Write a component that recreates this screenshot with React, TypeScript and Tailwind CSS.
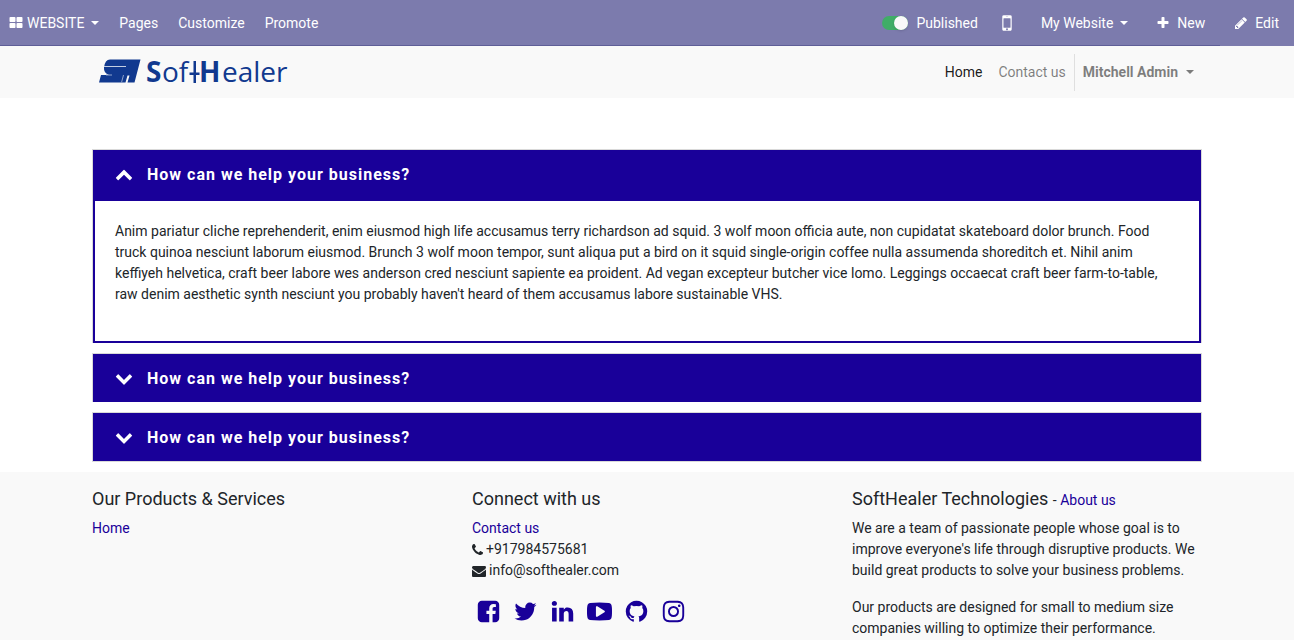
import React, { useState } from 'react';

const icons = {
  thLarge:
    'M832 1024v384q0 52-38 90t-90 38h-512q-52 0-90-38t-38-90v-384q0-52 38-90t90-38h512q52 0 90 38t38 90zm0-768v384q0 52-38 90t-90 38h-512q-52 0-90-38t-38-90v-384q0-52 38-90t90-38h512q52 0 90 38t38 90zm896 768v384q0 52-38 90t-90 38h-512q-52 0-90-38t-38-90v-384q0-52 38-90t90-38h512q52 0 90 38t38 90zm0-768v384q0 52-38 90t-90 38h-512q-52 0-90-38t-38-90v-384q0-52 38-90t90-38h512q52 0 90 38t38 90z',
  mobile:
    'M976 1408q0-33-23.5-56.5t-56.5-23.5-56.5 23.5-23.5 56.5 23.5 56.5 56.5 23.5 56.5-23.5 23.5-56.5zm208-160v-704q0-13-9.5-22.5t-22.5-9.5h-512q-13 0-22.5 9.5t-9.5 22.5v704q0 13 9.5 22.5t22.5 9.5h512q13 0 22.5-9.5t9.5-22.5zm-192-848q0-16-16-16h-160q-16 0-16 16t16 16h160q16 0 16-16zm288-16v1024q0 52-38 90t-90 38h-512q-52 0-90-38t-38-90v-1024q0-52 38-90t90-38h512q52 0 90 38t38 90z',
  plus:
    'M1600 736v192q0 40-28 68t-68 28h-416v416q0 40-28 68t-68 28h-192q-40 0-68-28t-28-68v-416h-416q-40 0-68-28t-28-68v-192q0-40 28-68t68-28h416v-416q0-40 28-68t68-28h192q40 0 68 28t28 68v416h416q40 0 68 28t28 68z',
  pencil:
    'M491 1536l91-91-235-235-91 91v107h128v128h107zm523-928q0-22-22-22-10 0-17 7l-542 542q-7 7-7 17 0 22 22 22 10 0 17-7l542-542q7-7 7-17zm-54-192l416 416-832 832h-416v-416zm683 96q0 53-37 90l-166 166-416-416 166-165q36-38 90-38 53 0 91 38l235 234q37 39 37 91z',
  chevronDown:
    'M1683 808l-742 741q-19 19-45 19t-45-19l-742-741q-19-19-19-45.5t19-45.5l166-165q19-19 45-19t45 19l531 531 531-531q19-19 45-19t45 19l166 165q19 19 19 45.5t-19 45.5z',
  chevronUp:
    'M1683 1331l-166 165q-19 19-45 19t-45-19l-531-531-531 531q-19 19-45 19t-45-19l-166-165q-19-19-19-45.5t19-45.5l742-741q19-19 45-19t45 19l742 741q19 19 19 45.5t-19 45.5z',
  phone:
    'M1600 1240q0 27-10 70.5t-21 68.5q-21 50-122 106-94 51-186 51-27 0-52.5-3.5t-57.5-12.5-47.5-14.5-55.5-20.5-49-18q-98-35-175-83-128-79-264.5-215.5t-215.5-264.5q-48-77-83-175-3-9-18-49t-20.5-55.5-14.5-47.5-12.5-57.5-3.5-52.5q0-92 51-186 56-101 106-122 25-11 68.5-21t70.5-10q14 0 21 3 18 6 53 76 11 19 30 54t35 63.5 31 53.5q3 4 17.5 25t21.5 35.5 7 28.5q0 20-28.5 50t-62 55-62 53-28.5 46q0 9 5 22.5t8.5 20.5 14 24 11.5 19q76 137 174 235t235 174q2 1 19 11.5t24 14 20.5 8.5 22.5 5q18 0 46-28.5t53-62 55-62 50-28.5q14 0 28.5 7t35.5 21.5 25 17.5q25 15 53.5 31t63.5 35 54 30q70 35 76 53 3 7 3 21z',
  envelope:
    'M1792 710v794q0 66-47 113t-113 47h-1472q-66 0-113-47t-47-113v-794q44 49 101 87 362 246 497 345 57 42 92.5 65.5t94.5 48 110 24.5h2q51 0 110-24.5t94.5-48 92.5-65.5q170-123 498-345 57-39 100-87zm0-294q0 79-49 151t-122 123q-376 261-468 325-10 7-42.5 31t-54 38.5-52 32.5-57.5 27-50 9h-2q-23 0-50-9t-57.5-27-52-32.5-54-38.5-42.5-31q-91-64-262-182.5t-205-142.5q-62-42-117-115.5t-55-136.5q0-78 41.5-130t118.5-52h1472q65 0 112.5 47t47.5 113z',
  facebook:
    'M1376 128q119 0 203.5 84.5t84.5 203.5v960q0 119-84.5 203.5t-203.5 84.5h-188v-595h199l30-232h-229v-148q0-56 23.5-84t91.5-28l122-1v-207q-63-9-178-9-136 0-217.5 80t-81.5 226v171h-200v232h200v595h-532q-119 0-203.5-84.5t-84.5-203.5v-960q0-119 84.5-203.5t203.5-84.5h960z',
  twitter:
    'M1684 408q-67 98-162 167 1 14 1 42 0 130-38 259.5t-115.5 248.5-184.5 210.5-258 146-323 54.5q-271 0-496-145 35 4 78 4 225 0 401-138-105-2-188-64.5t-114-159.5q33 5 61 5 43 0 85-11-112-23-185.5-111.5t-73.5-205.5v-4q68 38 146 41-66-44-105-115t-39-154q0-88 44-163 121 149 294.5 238.5t371.5 99.5q-8-38-8-74 0-134 94.5-228.5t228.5-94.5q140 0 236 102 109-21 205-78-37 115-142 178 93-10 186-50z',
  linkedin:
    'M477 625v991h-330v-991h330zm21-306q1 73-50.5 122t-135.5 49h-2q-82 0-132-49t-50-122q0-74 51.5-122.5t134.5-48.5 133 48.5 51 122.5zm1166 729v568h-329v-530q0-105-40.5-164.5t-126.5-59.5q-63 0-105.5 34.5t-63.5 85.5q-11 30-11 81v553h-329q2-399 2-647t-1-296l-1-48h329v144h-2q20-32 41-56t56.5-52 87-43.5 114.5-15.5q171 0 275 113.5t104 332.5z',
  youtube:
    'M1280 896q0-37-30-54l-512-320q-31-20-65-2-33 18-33 56v640q0 38 33 56 16 8 31 8 20 0 34-10l512-320q30-17 30-54zm512 0q0 96-1 150t-8.5 136.5-22.5 147.5q-16 73-69 123t-124 58q-222 25-671 25t-671-25q-71-8-124.5-58t-69.5-123q-14-65-21.5-147.5t-8.5-136.5-1-150 1-150 8.5-136.5 22.5-147.5q16-73 69-123t124-58q222-25 671-25t671 25q71 8 124.5 58t69.5 123q14 65 21.5 147.5t8.5 136.5 1 150z',
  github:
    'M896 128q209 0 385.5 103t279.5 279.5 103 385.5q0 251-146.5 451.5t-378.5 277.5q-27 5-40-7t-13-30q0-3 .5-76.5t.5-134.5q0-97-52-142 57-6 102.5-18t94-39 81-66.5 53-105 20.5-150.5q0-119-79-206 37-91-8-204-28-9-81 11t-92 44l-38 24q-93-26-192-26t-192 26q-16-11-42.5-27t-83.5-38.5-85-13.5q-45 113-8 204-79 87-79 206 0 85 20.5 150t52.5 105 80.5 67 94 39 102.5 18q-39 36-49 103-21 10-45 15t-57 5-65.5-21.5-55.5-62.5q-19-32-48.5-52t-49.5-24l-20-3q-21 0-29 4.5t-5 11.5 9 14 13 12l7 5q22 10 43.5 38t31.5 51l10 23q13 38 44 61.5t67 30 69.5 7 55.5-3.5l23-4q0 38 .5 88.5t.5 54.5q0 18-13 30t-40 7q-232-77-378.5-277.5t-146.5-451.5q0-209 103-385.5t279.5-279.5 385.5-103z',
  instagram:
    'M1152 896q0-106-75-181t-181-75-181 75-75 181 75 181 181 75 181-75 75-181zm138 0q0 164-115 279t-279 115-279-115-115-279 115-279 279-115 279 115 115 279zm108-410q0 38-27 65t-65 27-65-27-27-65 27-65 65-27 65 27 27 65zm-502-220q-7 0-76.5-.5t-105.5 0-96.5 3-103 10-71.5 18.5q-50 20-88 58t-58 88q-11 29-18.5 71.5t-10 103-3 96.5 0 105.5.5 76.5-.5 76.5 0 105.5 3 96.5 10 103 18.5 71.5q20 50 58 88t88 58q29 11 71.5 18.5t103 10 96.5 3 105.5 0 76.5-.5 76.5.5 105.5 0 96.5-3 103-10 71.5-18.5q50-20 88-58t58-88q11-29 18.5-71.5t10-103 3-96.5 0-105.5-.5-76.5.5-76.5 0-105.5-3-96.5-10-103-18.5-71.5q-20-50-58-88t-88-58q-29-11-71.5-18.5t-103-10-96.5-3-105.5 0-76.5.5zm768 630q0 229-5 317-10 208-124 322t-322 124q-88 5-317 5t-317-5q-208-10-322-124t-124-322q-5-88-5-317t5-317q10-208 124-322t322-124q88-5 317-5t317 5q208 10 322 124t124 322q5 88 5 317z',
};

type IconName = keyof typeof icons;

type IconProps = {
  name: IconName;
  className?: string;
  viewBox?: string;
};

function Icon({ name, className = 'size-3.5', viewBox = '0 0 1792 1792' }: IconProps) {
  return (
    <svg className={`shrink-0 ${className}`} viewBox={viewBox} fill="currentColor" aria-hidden="true">
      <path d={icons[name]} />
    </svg>
  );
}

function Caret() {
  return (
    <svg className="h-1 w-2 shrink-0" viewBox="0 0 8 4" fill="currentColor" aria-hidden="true">
      <path d="M0 0h8L4 4z" />
    </svg>
  );
}

function Logo() {
  return (
    <svg className="h-11 w-[192px]" viewBox="0 -6 192 44" fill="#11398f" role="img" aria-label="SoftHealer">
      <path d="M14 3.5H44.5L38.5 26.5H31.5L33.5 19.5H31.5L29.5 26.5H3L5 19H13Q7.500 17 8 11.500Q9 3.500 14 3.500Z" />
      <path d="M8 10.500H30" stroke="#c3cee3" strokeWidth="1" fill="none" />
      <path d="M27.500 19L25.500 26.500M10 19H16" stroke="#8fa3cb" strokeWidth="1" fill="none" />
      <g fontFamily="'Open Sans', 'Noto Sans', sans-serif" fontSize="28">
        <text x="50" y="26" fontWeight="700">S</text>
        <text x="66" y="26">of</text>
        <text x="103" y="26" fontWeight="700">H</text>
        <text x="126" y="26">ealer</text>
      </g>
      <path d="M97.500 5h2.500v22h-2.500zM93.500 16.500h10v2.500h-10z" />
    </svg>
  );
}

const socials: { name: IconName; label: string }[] = [
  { name: 'facebook', label: 'Facebook' },
  { name: 'twitter', label: 'Twitter' },
  { name: 'linkedin', label: 'LinkedIn' },
  { name: 'youtube', label: 'YouTube' },
  { name: 'github', label: 'GitHub' },
  { name: 'instagram', label: 'Instagram' },
];

const answer =
  "Anim pariatur cliche reprehenderit, enim eiusmod high life accusamus terry richardson ad squid. 3 wolf moon officia aute, non cupidatat skateboard dolor brunch. Food truck quinoa nesciunt laborum eiusmod. Brunch 3 wolf moon tempor, sunt aliqua put a bird on it squid single-origin coffee nulla assumenda shoreditch et. Nihil anim keffiyeh helvetica, craft beer labore wes anderson cred nesciunt sapiente ea proident. Ad vegan excepteur butcher vice lomo. Leggings occaecat craft beer farm-to-table, raw denim aesthetic synth nesciunt you probably haven't heard of them accusamus labore sustainable VHS.";

const faqs = [
  { id: 'faq-1', question: 'How can we help your business?' },
  { id: 'faq-2', question: 'How can we help your business?' },
  { id: 'faq-3', question: 'How can we help your business?' },
];

function EditorBar() {
  const [published, setPublished] = useState(true);

  return (
    <nav className="flex h-[46px] items-stretch justify-between bg-[#7c7bad] text-white">
      <div className="flex grow items-stretch justify-between shadow-[inset_0_-1px_0_#5f5e97]">
        <div className="flex items-center">
          <button className="flex items-center pr-2.5 pl-[9px]">
            <Icon name="thLarge" className="mr-1 size-3.5" />
            <span className="mr-[7px]">WEBSITE</span>
            <Caret />
          </button>
          <button className="px-2.5">Pages</button>
          <button className="px-2.5">Customize</button>
          <button className="px-2.5">Promote</button>
        </div>
        <div className="flex items-center">
          <label className="flex items-center gap-2 px-[15px]">
            <input
              type="checkbox"
              className="peer sr-only"
              checked={published}
              onChange={() => setPublished(!published)}
            />
            <span className="flex h-3.5 w-[26px] items-center justify-start rounded-full bg-gray-400 peer-checked:justify-end peer-checked:bg-[#40ad67]">
              <span className="size-3.5 rounded-full bg-[#f9f9f9] shadow-sm" />
            </span>
            Published
          </label>
          <button className="px-[3px]" aria-label="Mobile preview">
            <Icon name="mobile" className="size-[22px]" />
          </button>
          <button className="flex items-center gap-[7px] pr-[13px] pl-5">
            My Website
            <Caret />
          </button>
          <button className="flex items-center gap-[7px] px-[15px]">
            <Icon name="plus" />
            New
          </button>
        </div>
      </div>
      <button className="flex items-center gap-[7px] pr-[15px] pl-3.5">
        <Icon name="pencil" />
        Edit
      </button>
    </nav>
  );
}

function Header() {
  return (
    <header className="bg-[#f9f9f9]">
      <div className="mx-auto flex h-[52px] max-w-[1140px] items-center justify-between px-[15px]">
        <a href="#" className="pl-1">
          <Logo />
        </a>
        <nav className="flex items-center">
          <a href="#" className="px-2 text-black/90">Home</a>
          <a href="#" className="px-2 text-black/50">Contact us</a>
          <button className="flex h-[37px] items-center gap-2 border-l border-black/10 px-2 font-bold text-black/50">
            Mitchell Admin
            <Caret />
          </button>
        </nav>
      </div>
    </header>
  );
}

function Accordion() {
  const [open, setOpen] = useState<string | null>('faq-1');

  return (
    <section className="mx-auto flex max-w-[1140px] flex-col gap-2.5 px-[15px] pt-[51px] pb-2.5">
      {faqs.map((faq) => (
        <div key={faq.id} className="border border-b-0 border-black/15 last:border-b">
          <h2>
            <button
              className="flex h-12 w-full items-center gap-3.5 bg-[#190099] px-[22px] text-left text-base font-bold tracking-[1px] text-white"
              aria-expanded={open === faq.id}
              aria-controls={faq.id}
              onClick={() => setOpen(open === faq.id ? null : faq.id)}
            >
              <Icon name={open === faq.id ? 'chevronUp' : 'chevronDown'} className="size-[18px]" />
              <span className="pt-0.5">{faq.question}</span>
            </button>
          </h2>
          {open === faq.id && (
            <div id={faq.id} className="border-2 border-t-3 border-[#190099] bg-white p-5">
              <p className="mb-4">{answer}</p>
            </div>
          )}
        </div>
      ))}
    </section>
  );
}

function Footer() {
  return (
    <footer className="grow bg-[#f9f9f9]">
      <div className="mx-auto grid max-w-[1140px] grid-cols-3 pt-4">
        <div className="px-[15px]">
          <h3 className="mb-2 h-[22px] text-lg leading-[21px]">Our Products &amp; Services</h3>
          <a href="#" className="text-[#190099]">Home</a>
        </div>
        <div className="px-[15px]">
          <h3 className="mb-2 h-[22px] text-lg leading-[21px]">Connect with us</h3>
          <ul>
            <li>
              <a href="#" className="text-[#190099]">Contact us</a>
            </li>
            <li className="flex items-center gap-[3px]">
              <Icon name="phone" className="h-3.5 w-[11px]" viewBox="192 0 1408 1792" />
              +917984575681
            </li>
            <li className="flex items-center gap-[3px]">
              <Icon name="envelope" />
              info@softhealer.com
            </li>
          </ul>
          <div className="mt-4 flex h-7 items-center gap-3 pl-1 text-[#190099]">
            {socials.map((social) => (
              <a key={social.name} href="#" aria-label={social.label}>
                <Icon name={social.name} className="size-[25px]" />
              </a>
            ))}
          </div>
        </div>
        <div className="px-[15px]">
          <h3 className="mb-2 h-[22px] text-lg leading-[21px]">
            SoftHealer Technologies{' '}
            <small className="text-sm leading-[21px]">
              - <a href="#" className="text-[#190099]">About us</a>
            </small>
          </h3>
          <p className="mb-4">
            We are a team of passionate people whose goal is to improve everyone's life through disruptive products. We
            build great products to solve your business problems.
          </p>
          <p>Our products are designed for small to medium size companies willing to optimize their performance.</p>
        </div>
      </div>
    </footer>
  );
}

export default function App() {
  return (
    <div className="flex min-h-screen flex-col bg-white font-[Roboto,sans-serif] text-sm leading-[21px] text-[#212529]">
      <EditorBar />
      <Header />
      <main>
        <Accordion />
      </main>
      <Footer />
    </div>
  );
}
